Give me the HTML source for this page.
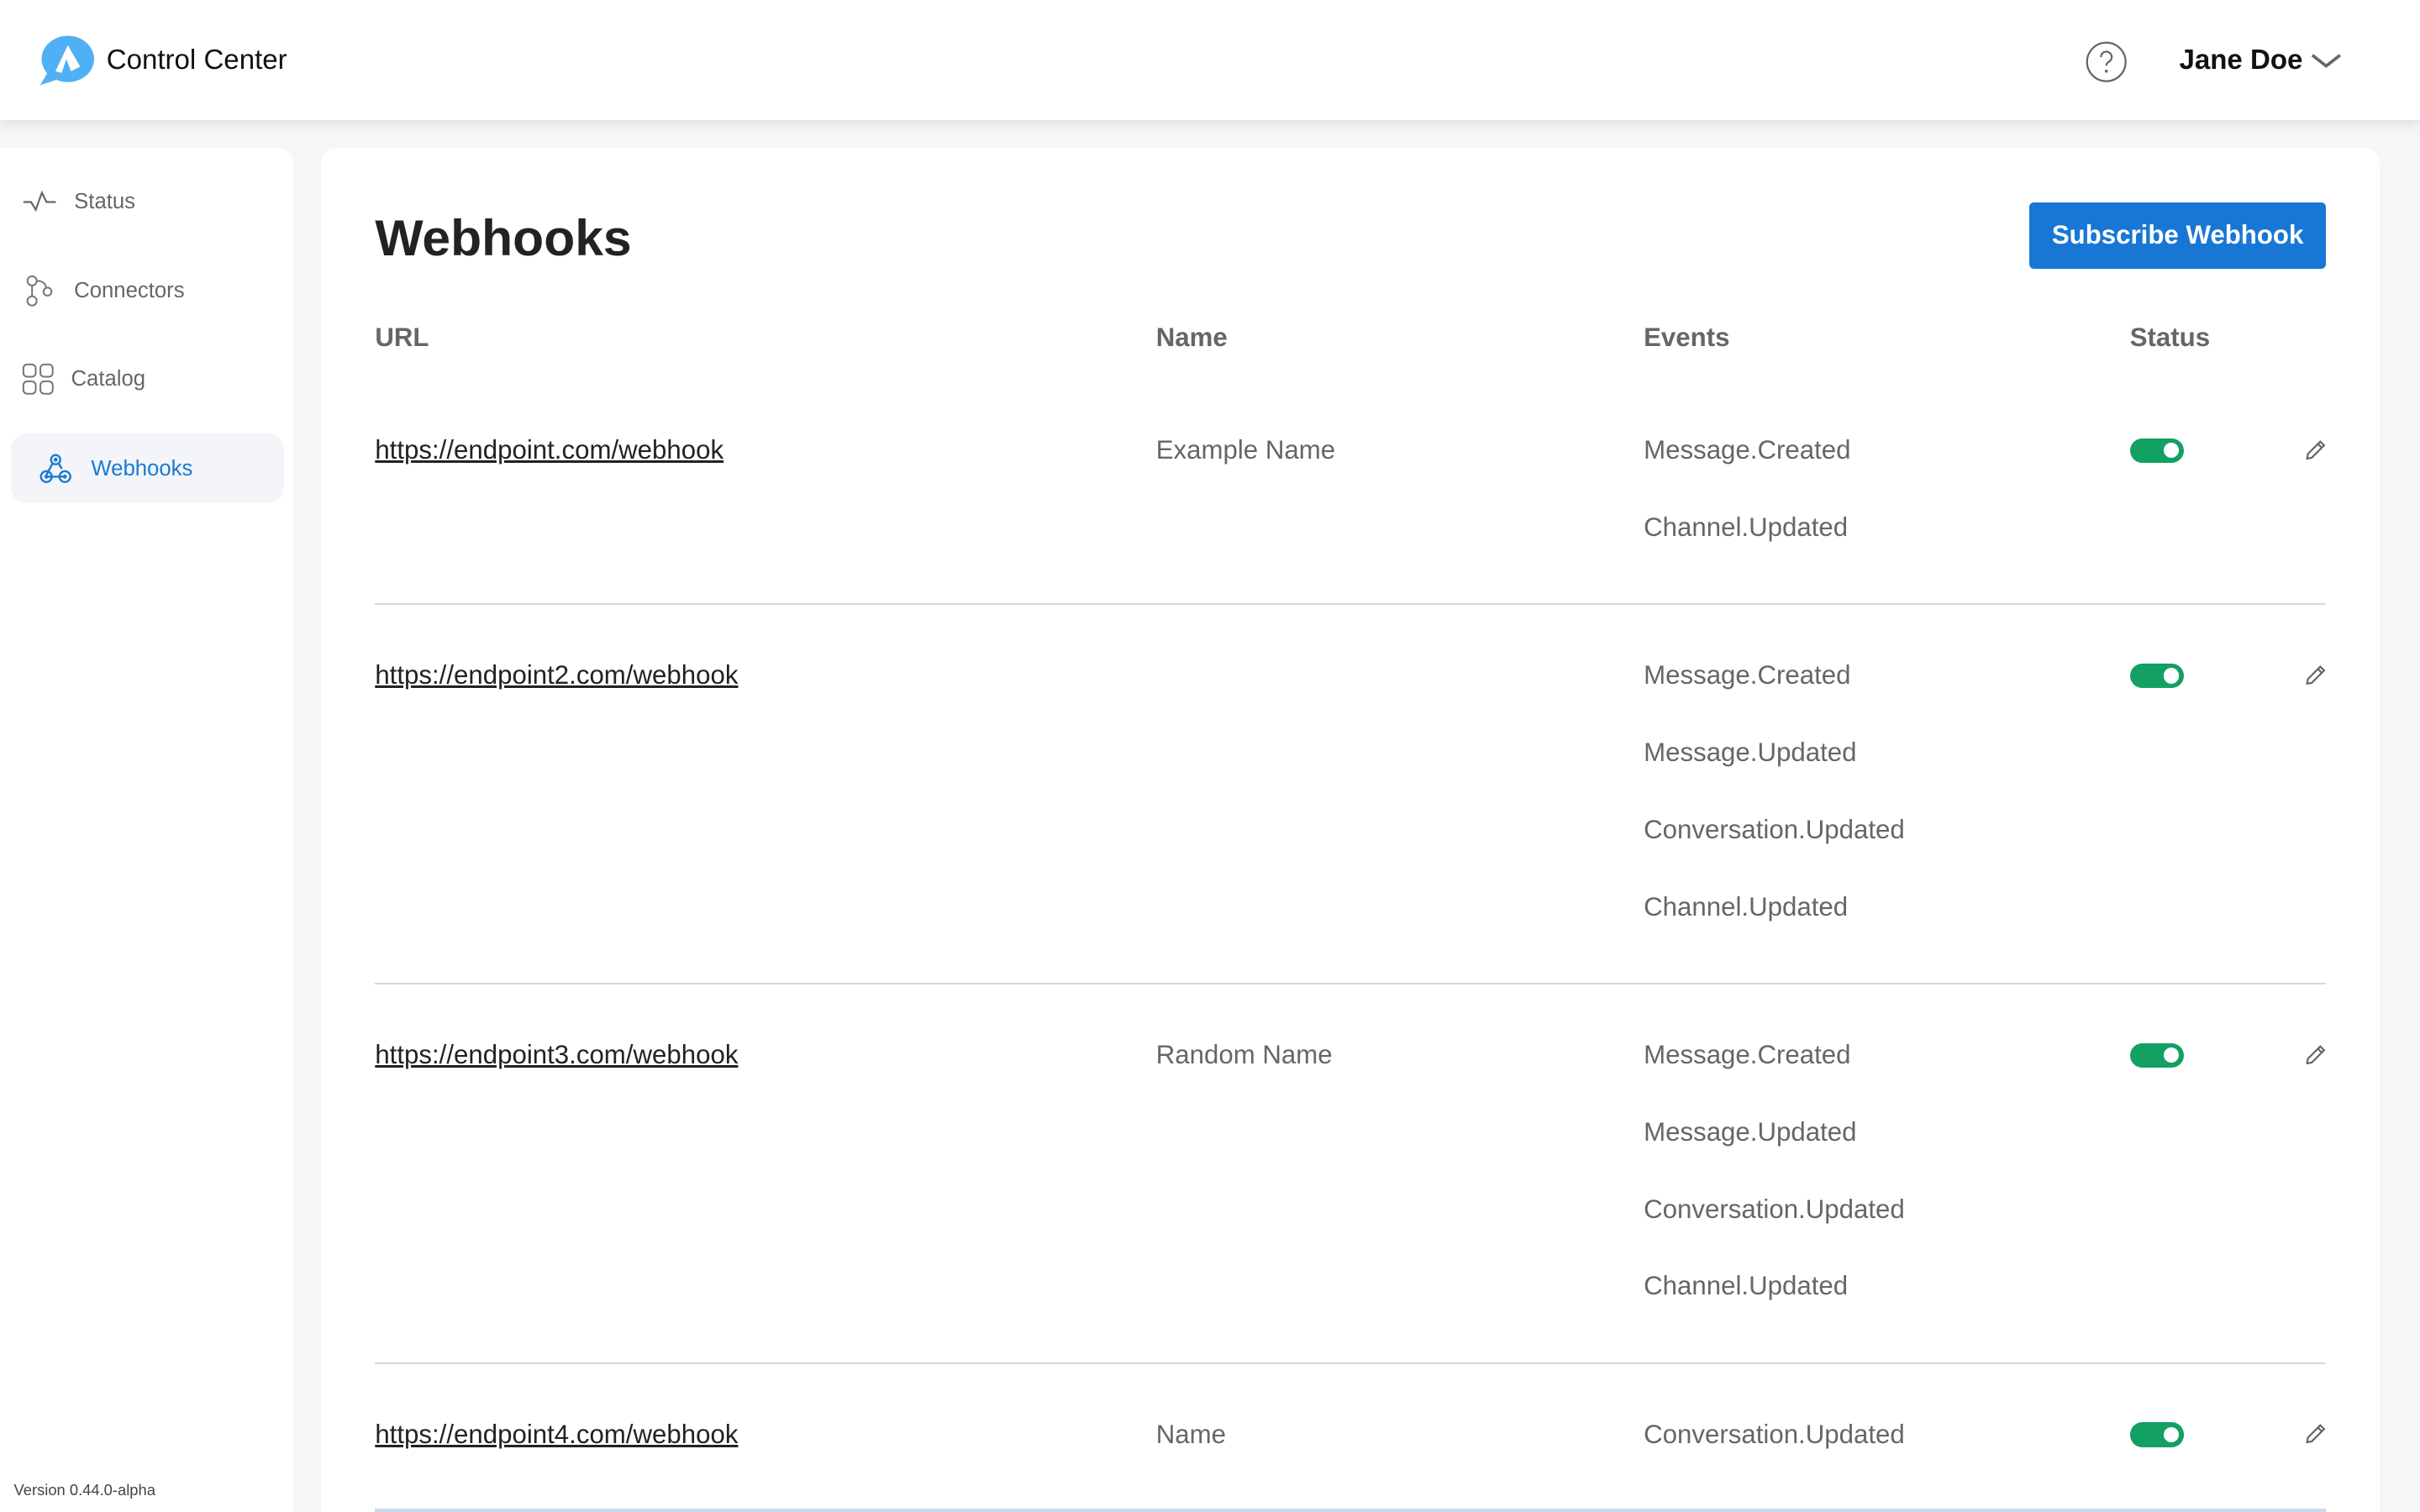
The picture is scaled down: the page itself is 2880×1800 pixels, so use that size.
<!DOCTYPE html>
<html><head><meta charset="utf-8"><style>
html,body{margin:0;padding:0;width:2880px;height:1800px;overflow:hidden;background:#f5f6f8}
#w{zoom:1.836735;width:1568px;height:980px;position:relative;font-family:"Liberation Sans",sans-serif}
.a{position:absolute;white-space:nowrap}
.hdr{position:absolute;left:0;top:0;width:1568px;height:78px;background:#fff;box-shadow:0 2px 8px rgba(0,0,0,.12)}
.side{position:absolute;left:0;top:96px;width:190px;height:900px;background:#fff;border-radius:0 10px 0 0}
.main{position:absolute;left:208px;top:96px;width:1334px;height:900px;background:#fff;border-radius:10px}
.nav{font-size:14px;color:#666}
.th{font-size:17px;font-weight:bold;color:#666}
.td{font-size:17px;color:#666}
.url{font-size:17px;color:#222;text-decoration:underline}
.line{position:absolute;left:243px;width:1264px;height:1px;background:#d8d8d8}
.tg{position:absolute;width:35px;height:16px;border-radius:8px;background:#12a063}
.tg:after{content:"";position:absolute;right:3px;top:3px;width:10px;height:10px;border-radius:50%;background:#fff}
</style></head><body><div id="w">
<div class="hdr"></div>
<svg class="a" style="left:24px;top:21px" width="38" height="36" viewBox="0 0 38 36"><ellipse cx="20" cy="17" rx="17" ry="15" fill="#4fb0f5"/><path d="M2 34 L8 24 L14 30Z" fill="#4fb0f5"/><path d="M12 25 L20 8 L28 22 L22 25 L19 17 L16 26Z" fill="#fff"/></svg>
<div class="a" style="left:69px;top:29px;font-size:18px;color:#111">Control Center</div>
<svg class="a" style="left:1351px;top:26px" width="28" height="28" viewBox="0 0 28 28"><circle cx="14" cy="14" r="12.5" fill="none" stroke="#666" stroke-width="1.2"/><path d="M10.5 11a3.5 3.5 0 1 1 5 3c-1 .6-1.5 1.2-1.5 2.5" fill="none" stroke="#666" stroke-width="1.2"/><circle cx="14" cy="20" r="1" fill="#666"/></svg>
<div class="a" style="left:1412px;top:29px;font-size:18px;font-weight:bold;color:#111">Jane Doe</div>
<svg class="a" style="left:1497px;top:34px" width="20" height="12" viewBox="0 0 20 12"><path d="M1 2 L10 9 L19 2" fill="none" stroke="#666" stroke-width="2"/></svg>
<div class="side"></div>
<div class="main"></div>
<svg class="a" style="left:14px;top:122px" width="24" height="16" viewBox="0 0 24 16"><path d="M1 9 H6 L9 14 L13 3 L16 9 H22" fill="none" stroke="#666" stroke-width="1.2"/></svg>
<div class="a nav" style="left:48px;top:123px">Status</div>
<svg class="a" style="left:16px;top:178px" width="22" height="22" viewBox="0 0 22 22"><circle cx="5" cy="4" r="3" fill="none" stroke="#777" stroke-width="1.1"/><circle cx="5" cy="17" r="3" fill="none" stroke="#777" stroke-width="1.1"/><circle cx="15" cy="11" r="2.6" fill="none" stroke="#777" stroke-width="1.1"/><path d="M5 7 V14 M8 4 C12 4 14 6 14 8.5" fill="none" stroke="#777" stroke-width="1.1"/></svg>
<div class="a nav" style="left:48px;top:181px">Connectors</div>
<svg class="a" style="left:14px;top:235px" width="22" height="22" viewBox="0 0 22 22"><rect x="1" y="1" width="8" height="8" rx="2.5" fill="none" stroke="#777" stroke-width="1.1"/><rect x="12" y="1" width="8" height="8" rx="2.5" fill="none" stroke="#777" stroke-width="1.1"/><rect x="1" y="12" width="8" height="8" rx="2.5" fill="none" stroke="#777" stroke-width="1.1"/><rect x="12" y="12" width="8" height="8" rx="2.5" fill="none" stroke="#777" stroke-width="1.1"/></svg>
<div class="a nav" style="left:46px;top:238px">Catalog</div>
<div class="a" style="left:7px;top:281px;width:177px;height:45px;background:#f3f5f8;border-radius:10px"></div>
<svg class="a" style="left:25px;top:293px" width="22" height="22" viewBox="0 0 22 22"><g fill="none" stroke="#1a7ad6" stroke-width="1.3"><circle cx="11" cy="5" r="3"/><path d="M9 7.5 L5 15 M13 7.5 L15 11"/><circle cx="5" cy="16" r="3.5"/><circle cx="17" cy="16" r="3.5"/><path d="M5 16 H17"/></g><circle cx="11" cy="5" r="1.3" fill="#1a7ad6"/><circle cx="5" cy="16" r="1.3" fill="#1a7ad6"/><circle cx="17" cy="16" r="1.3" fill="#1a7ad6"/></svg>
<div class="a" style="left:59px;top:296px;font-size:14px;color:#1a7ad6">Webhooks</div>
<div class="a" style="left:9px;top:960px;font-size:10px;color:#444">Version 0.44.0-alpha</div>

<div class="a" style="left:243px;top:135px;font-size:33px;font-weight:bold;color:#222">Webhooks</div>
<div class="a" style="left:1315px;top:131px;width:192px;height:43px;background:#1877d5;border-radius:3px;color:#fff;font-size:17px;font-weight:bold;text-align:center;line-height:43px">Subscribe Webhook</div>
<div class="a th" style="left:243px;top:209px">URL</div>
<div class="a th" style="left:749px;top:209px">Name</div>
<div class="a th" style="left:1065px;top:209px">Events</div>
<div class="a th" style="left:1380px;top:209px">Status</div>

<div class="a url" style="left:243px;top:282px">https://endpoint.com/webhook</div>
<div class="a td" style="left:749px;top:282px">Example Name</div>
<div class="a td" style="left:1065px;top:282px">Message.Created</div>
<div class="a td" style="left:1065px;top:332px">Channel.Updated</div>
<div class="line" style="top:391px"></div>

<div class="a url" style="left:243px;top:428px">https://endpoint2.com/webhook</div>
<div class="a td" style="left:1065px;top:428px">Message.Created</div>
<div class="a td" style="left:1065px;top:478px">Message.Updated</div>
<div class="a td" style="left:1065px;top:528px">Conversation.Updated</div>
<div class="a td" style="left:1065px;top:578px">Channel.Updated</div>
<div class="line" style="top:637px"></div>

<div class="a url" style="left:243px;top:674px">https://endpoint3.com/webhook</div>
<div class="a td" style="left:749px;top:674px">Random Name</div>
<div class="a td" style="left:1065px;top:674px">Message.Created</div>
<div class="a td" style="left:1065px;top:724px">Message.Updated</div>
<div class="a td" style="left:1065px;top:774px">Conversation.Updated</div>
<div class="a td" style="left:1065px;top:824px">Channel.Updated</div>
<div class="line" style="top:883px"></div>

<div class="a url" style="left:243px;top:920px">https://endpoint4.com/webhook</div>
<div class="a td" style="left:749px;top:920px">Name</div>
<div class="a td" style="left:1065px;top:920px">Conversation.Updated</div>
<div class="a" style="left:243px;top:978px;width:1264px;height:2px;background:#c9daf0"></div>

<div class="tg" style="left:1380px;top:284px"></div>
<div class="tg" style="left:1380px;top:430px"></div>
<div class="tg" style="left:1380px;top:676px"></div>
<div class="tg" style="left:1380px;top:922px"></div>
<svg class="a" style="left:1493px;top:284px" width="15" height="15" viewBox="0 0 15 15"><path d="M2 13 L2.5 10 L10.5 2 L13 4.5 L5 12.5Z M9 3.5 L11.5 6" fill="none" stroke="#666" stroke-width="1.2"/></svg>
<svg class="a" style="left:1493px;top:430px" width="15" height="15" viewBox="0 0 15 15"><path d="M2 13 L2.5 10 L10.5 2 L13 4.5 L5 12.5Z M9 3.5 L11.5 6" fill="none" stroke="#666" stroke-width="1.2"/></svg>
<svg class="a" style="left:1493px;top:676px" width="15" height="15" viewBox="0 0 15 15"><path d="M2 13 L2.5 10 L10.5 2 L13 4.5 L5 12.5Z M9 3.5 L11.5 6" fill="none" stroke="#666" stroke-width="1.2"/></svg>
<svg class="a" style="left:1493px;top:922px" width="15" height="15" viewBox="0 0 15 15"><path d="M2 13 L2.5 10 L10.5 2 L13 4.5 L5 12.5Z M9 3.5 L11.5 6" fill="none" stroke="#666" stroke-width="1.2"/></svg>
</div></body></html>
